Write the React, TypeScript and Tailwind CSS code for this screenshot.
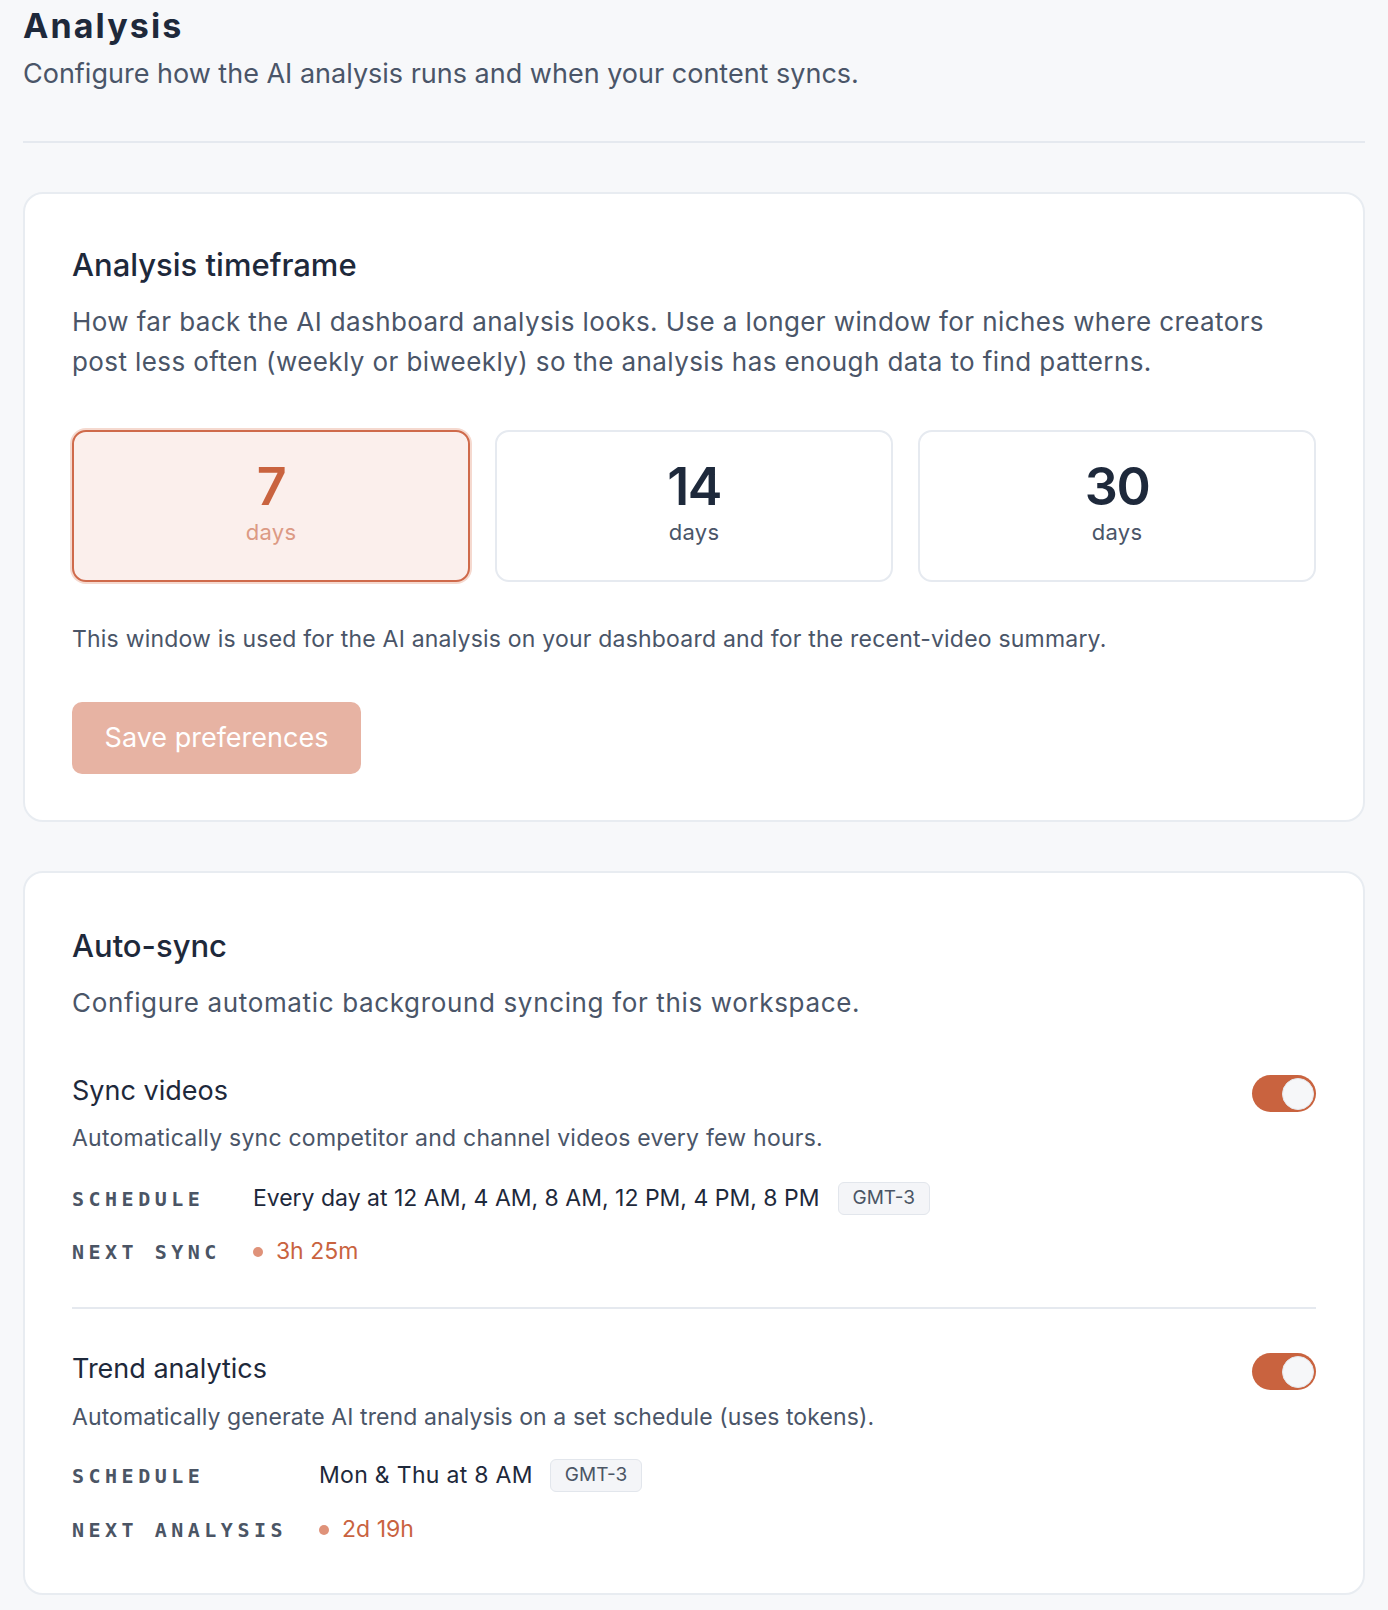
import React from "react";

const FONT = { fontFamily: "Inter, 'Noto Sans', sans-serif" };
const MONO = { fontFamily: "'DejaVu Sans Mono', 'Liberation Mono', monospace" };

function Toggle() {
  return (
    <div className="mt-[2px] flex h-[37px] w-[64px] shrink-0 items-center justify-end rounded-full bg-[#c9633f] pr-[2.5px]">
      <div className="h-[32px] w-[32px] rounded-full border border-[#e6e8ec] bg-[#f6f7f9]" />
    </div>
  );
}

function Label({ children }: { children: React.ReactNode }) {
  return (
    <div
      style={MONO}
      className="flex h-[33px] items-center text-[20px] font-bold uppercase tracking-[4.5px] text-[#4b5565]"
    >
      {children}
    </div>
  );
}

function Badge({ children }: { children: React.ReactNode }) {
  return (
    <span className="flex h-[33px] items-center rounded-[6px] border-[1.5px] border-[#e2e6ec] bg-[#f4f5f8] px-[14px] text-[19px] text-[#4b5565]">
      {children}
    </span>
  );
}

function Countdown({ children }: { children: React.ReactNode }) {
  return (
    <div className="flex h-[33px] items-center gap-[13px]">
      <span className="h-[10px] w-[10px] rounded-full bg-[#df9279]" />
      <span className="text-[23px] leading-[33px] text-[#c9633f]">{children}</span>
    </div>
  );
}

function DayOption({ n, selected }: { n: string; selected?: boolean }) {
  return (
    <div
      className={
        selected
          ? "flex h-[152px] flex-col items-center justify-center gap-[5px] rounded-[14px] border-2 border-[#cf6a4b] bg-[#fbefec] pb-[5px] shadow-[0_0_0_2px_#f5d9cf]"
          : "flex h-[152px] flex-col items-center justify-center gap-[5px] rounded-[14px] border-2 border-[#e6eaf0] bg-white pb-[5px]"
      }
    >
      <div
        className={
          selected
            ? "text-[52px] font-semibold leading-[52px] tracking-[-1.5px] text-[#c9633f]"
            : "text-[52px] font-semibold leading-[52px] tracking-[-1.5px] text-[#1e293b]"
        }
      >
        {n}
      </div>
      <div
        className={
          selected
            ? "text-[22px] leading-[28px] tracking-[0.3px] text-[#dc9a84]"
            : "text-[22px] leading-[28px] tracking-[0.3px] text-[#4a5568]"
        }
      >
        days
      </div>
    </div>
  );
}

export default function App() {
  return (
    <div style={FONT} className="min-h-screen bg-[#f7f8fa] px-[23px] pt-[6px] pb-[18px]">
      <h1 className="text-[34px] font-bold leading-[40px] tracking-[2.1px] text-[#1e293b]">Analysis</h1>
      <p className="mt-[10px] text-[27px] leading-[36px] text-[#4a5568]">
        Configure how the AI analysis runs and when your content syncs.
      </p>
      <div className="mt-[49px] h-[2px] bg-[#e5e9ef]" />

      <section className="mt-[49px] rounded-[20px] border-2 border-[#e8ecf1] bg-white px-[47px] pt-[52px] pb-[46px]">
        <h2 className="text-[31px] font-medium leading-[38px] text-[#1e293b]">Analysis timeframe</h2>
        <p className="mt-[18px] text-[26px] leading-[40px] tracking-[0.4px] text-[#4a5568]">
          How far back the AI dashboard analysis looks. Use a longer window for niches where creators post less
          often (weekly or biweekly) so the analysis has enough data to find patterns.
        </p>
        <div className="mt-[48px] grid grid-cols-3 gap-[25px]">
          <DayOption n="7" selected />
          <DayOption n="14" />
          <DayOption n="30" />
        </div>
        <p className="mt-[41px] text-[23px] leading-[32px] tracking-[0.2px] text-[#4a5568]">
          This window is used for the AI analysis on your dashboard and for the recent-video summary.
        </p>
        <button className="mt-[47px] flex h-[72px] w-[289px] items-center justify-center rounded-[10px] bg-[#e7b3a3] text-[27px] text-white">
          Save preferences
        </button>
      </section>

      <section className="mt-[49px] rounded-[20px] border-2 border-[#e8ecf1] bg-white px-[47px] pt-[54px] pb-[47px]">
        <h2 className="text-[31px] font-medium leading-[38px] text-[#1e293b]">Auto-sync</h2>
        <p className="mt-[18px] text-[26px] leading-[40px] tracking-[0.65px] text-[#4a5568]">
          Configure automatic background syncing for this workspace.
        </p>

        <div className="mt-[50px] flex items-start justify-between">
          <div>
            <div className="text-[27px] leading-[36px] text-[#1e293b]">Sync videos</div>
            <div className="mt-[13px] text-[23px] leading-[32px] tracking-[0.24px] text-[#4a5568]">
              Automatically sync competitor and channel videos every few hours.
            </div>
          </div>
          <Toggle />
        </div>
        <div className="mt-[28px] grid grid-cols-[auto_1fr] gap-x-[32px] gap-y-[20px]">
          <Label>Schedule</Label>
          <div className="flex items-center gap-[18px]">
            <span className="text-[23px] leading-[33px] text-[#1e293b]">
              Every day at 12 AM, 4 AM, 8 AM, 12 PM, 4 PM, 8 PM
            </span>
            <Badge>GMT-3</Badge>
          </div>
          <Label>Next sync</Label>
          <Countdown>3h 25m</Countdown>
        </div>

        <div className="mt-[39px] h-[2px] bg-[#e5e9ef]" />

        <div className="mt-[42px] flex items-start justify-between">
          <div>
            <div className="text-[27px] leading-[36px] text-[#1e293b]">Trend analytics</div>
            <div className="mt-[14px] text-[23px] leading-[32px] tracking-[0.1px] text-[#4a5568]">
              Automatically generate AI trend analysis on a set schedule (uses tokens).
            </div>
          </div>
          <Toggle />
        </div>
        <div className="mt-[26px] grid grid-cols-[auto_1fr] gap-x-[32px] gap-y-[21px]">
          <Label>Schedule</Label>
          <div className="flex items-center gap-[17px]">
            <span className="text-[23px] leading-[33px] tracking-[0.3px] text-[#1e293b]">Mon &amp; Thu at 8 AM</span>
            <Badge>GMT-3</Badge>
          </div>
          <Label>Next analysis</Label>
          <Countdown>2d 19h</Countdown>
        </div>
      </section>
    </div>
  );
}
